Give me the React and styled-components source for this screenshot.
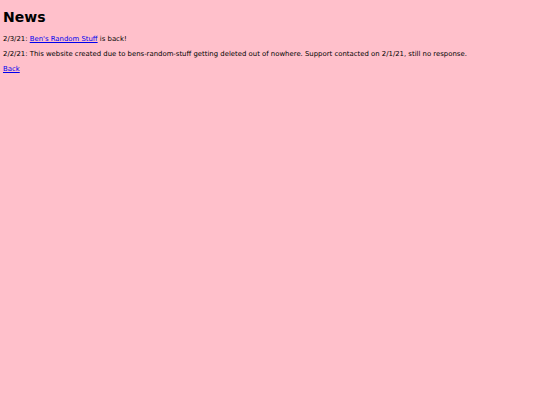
import React from 'react';
import styled, { createGlobalStyle } from 'styled-components';

const GlobalStyle = createGlobalStyle`
  html, body {
    margin: 0;
    background: pink;
  }
  body {
    padding: 3px;
    font-family: 'DejaVu Sans', Verdana, sans-serif;
    font-size: 6.9px;
    color: #000;
  }
`;

const Title = styled.h1`
  font-size: 14px;
  font-weight: bold;
  line-height: 16px;
  margin: 6px 0 10px 0;
`;

const Item = styled.p`
  margin: 0 0 7px 0;
  line-height: 8px;
`;

const Link = styled.a`
  color: #0000ee;
`;

const App = () => (
  <>
    <GlobalStyle />
    <Title>News</Title>
    <Item>2/3/21: <Link href="#">Ben's Random Stuff</Link> is back!</Item>
    <Item>2/2/21: This website created due to bens-random-stuff getting deleted out of nowhere. Support contacted on 2/1/21, still no response.</Item>
    <Item><Link href="#">Back</Link></Item>
  </>
);

export default App;
